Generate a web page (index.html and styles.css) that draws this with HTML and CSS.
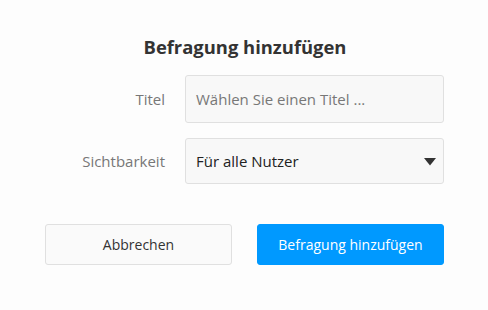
FILE: index.html
```html
<!DOCTYPE html>
<html lang="de">
<head>
<meta charset="utf-8">
<title>Befragung hinzufügen</title>
<link rel="stylesheet" href="styles.css">
</head>
<body>
<div class="dialog">
  <h1 class="title">Befragung hinzufügen</h1>
  <div class="form">
    <label class="label" for="titel">Titel</label>
    <div class="field input-field"><span class="placeholder">Wählen Sie einen Titel ...</span></div>
    <label class="label">Sichtbarkeit</label>
    <div class="field select-field">
      <span class="value">Für alle Nutzer</span>
      <svg class="caret" width="12" height="8" viewBox="0 0 12 8"><path d="M0 0 H12 L6 7.5 Z" fill="#333"/></svg>
    </div>
  </div>
  <div class="actions">
    <button class="btn btn-cancel">Abbrechen</button>
    <button class="btn btn-primary">Befragung hinzufügen</button>
  </div>
</div>
</body>
</html>
```

FILE: styles.css
```css
html, body {
  margin: 0;
  padding: 0;
  background: #fdfdfd;
}
body {
  font-family: "Open Sans", "Noto Sans", sans-serif;
  color: #333;
  width: 488px;
  height: 310px;
}
.dialog {
  padding: 35px 44px 0 45px;
}
.title {
  margin: 0;
  font-size: 18.4px;
  line-height: 24px;
  font-weight: 700;
  color: #333;
  text-align: center;
  padding-left: 1px;
}
.form {
  margin-top: 16px;
  display: grid;
  grid-template-columns: 1fr 259px;
  column-gap: 20px;
  row-gap: 15px;
  align-items: center;
}
.label {
  text-align: right;
  font-size: 15px;
  color: #777;
}
.field {
  box-sizing: border-box;
  background: #f8f8f8;
  border: 1px solid #e0e0e0;
  border-radius: 3px;
  display: flex;
  align-items: center;
  font-size: 15px;
}
.input-field {
  height: 48px;
  padding-left: 10px;
}
.placeholder {
  color: #777;
}
.select-field {
  height: 46px;
  padding: 0 7px 0 10px;
  justify-content: space-between;
}
.value {
  color: #222;
}
.caret {
  display: block;
  margin-top: 2px;
}
.actions {
  margin-top: 40px;
  display: flex;
  gap: 25px;
}
.btn {
  box-sizing: border-box;
  height: 41px;
  flex: 1;
  font-family: "Open Sans", "Noto Sans", sans-serif;
  font-size: 14px;
  border-radius: 3px;
  cursor: pointer;
}
.btn-cancel {
  background: #fafafa;
  border: 1px solid #e0e0e0;
  color: #333;
}
.btn-primary {
  background: #0099ff;
  border: 1px solid #0099ff;
  color: #fff;
}
```
